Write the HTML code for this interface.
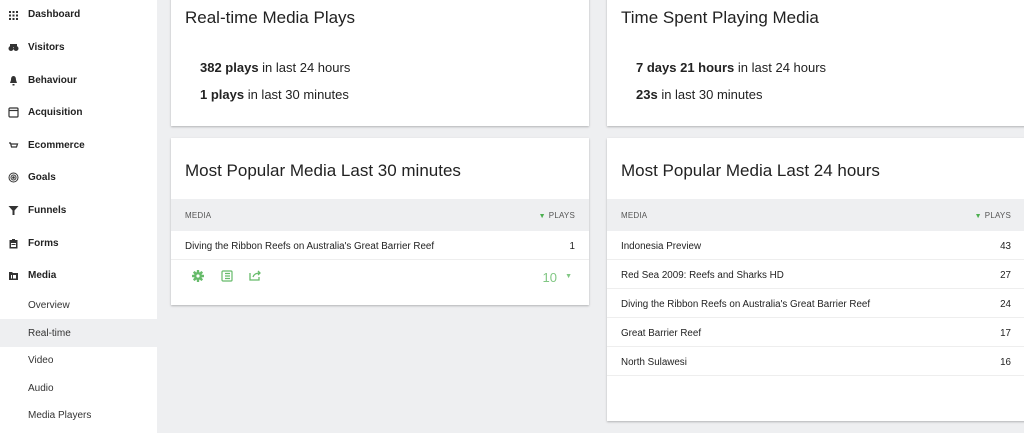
<!DOCTYPE html>
<html><head><meta charset="utf-8"><style>
*{margin:0;padding:0;box-sizing:border-box}
body{width:1024px;height:433px;overflow:hidden;background:#eeeff1;font-family:"Liberation Sans",Arial,sans-serif;color:#212121;position:relative}
.side{position:absolute;left:0;top:0;width:157px;height:433px;background:#fff}
.nav{position:absolute;left:28px;font-size:10px;font-weight:bold;color:#222}
.ic{position:absolute;left:8px;width:11px;height:11px}
.sub{position:absolute;left:28px;font-size:10px;color:#333}
.card{position:absolute;background:#fff;box-shadow:0 1px 2px rgba(0,0,0,.25)}
.h{position:absolute;left:14px;font-size:17px;color:#222}
.stat{position:absolute;left:29px;font-size:13px;color:#222}
.th{position:absolute;left:0;right:0;height:32px;background:#eeeff1;font-size:8px;color:#555;letter-spacing:.2px}
.th .l{position:absolute;left:14px;top:12px}
.th .r{position:absolute;right:14px;top:12px}
.tri{color:#4caf50;font-size:7px;margin-right:3px}
.row{position:absolute;left:0;right:0;height:29px;border-bottom:1px solid #eee;font-size:9.8px;color:#222}
.row .l{position:absolute;left:14px;top:10px}
.row .r{position:absolute;right:14px;top:10px}
</style></head><body>
<div class="side">
<svg class="ic" style="top:10px" viewBox="0 0 11 11" fill="#333"><rect x="1" y="1" width="2" height="2"/><rect x="4.5" y="1" width="2" height="2"/><rect x="8" y="1" width="2" height="2"/><rect x="1" y="4.5" width="2" height="2"/><rect x="4.5" y="4.5" width="2" height="2"/><rect x="8" y="4.5" width="2" height="2"/><rect x="1" y="8" width="2" height="2"/><rect x="4.5" y="8" width="2" height="2"/><rect x="8" y="8" width="2" height="2"/></svg>
<div class="nav" style="top:9px">Dashboard</div>
<svg class="ic" style="top:42px" viewBox="0 0 11 11" fill="#333"><circle cx="3" cy="6.5" r="2.5"/><circle cx="8" cy="6.5" r="2.5"/><rect x="2" y="2" width="7" height="3"/></svg>
<div class="nav" style="top:42px">Visitors</div>
<svg class="ic" style="top:75px" viewBox="0 0 11 11" fill="#333"><path d="M5.5 1C3.5 1 3 3 3 5L2 8h7L8 5C8 3 7.5 1 5.5 1zM4.5 9h2v1.5h-2z"/></svg>
<div class="nav" style="top:75px">Behaviour</div>
<svg class="ic" style="top:107px" viewBox="0 0 11 11" fill="none" stroke="#333" stroke-width="1.2"><rect x="1" y="1" width="9" height="9" rx="1"/><path d="M1 3.5h9"/></svg>
<div class="nav" style="top:107px">Acquisition</div>
<svg class="ic" style="top:140px" viewBox="0 0 11 11" fill="none" stroke="#333" stroke-width="1.2"><path d="M1 3h1.5l1 4h5l1-3H3"/></svg>
<div class="nav" style="top:140px">Ecommerce</div>
<svg class="ic" style="top:172px" viewBox="0 0 11 11" fill="none" stroke="#333" stroke-width="1"><circle cx="5.5" cy="5.5" r="4.5"/><circle cx="5.5" cy="5.5" r="2.5"/><circle cx="5.5" cy="5.5" r=".8" fill="#333"/></svg>
<div class="nav" style="top:172px">Goals</div>
<svg class="ic" style="top:205px" viewBox="0 0 11 11" fill="#333"><path d="M0.5 1h10L6.5 5.5v4.5h-2V5.5z"/></svg>
<div class="nav" style="top:205px">Funnels</div>
<svg class="ic" style="top:238px" viewBox="0 0 11 11" fill="#333"><path d="M1.5 2h2.5V1h3v1h2.5v8.5h-8zM3 5v4h5V5z"/><rect x="3.5" y="6" width="4" height="1"/></svg>
<div class="nav" style="top:238px">Forms</div>
<svg class="ic" style="top:270px" viewBox="0 0 11 11" fill="#333"><path d="M1 2h3l1 1h5v7H1z"/><rect x="3" y="5" width="1" height="3.5" fill="#fff"/><rect x="5" y="5" width="3" height="3.5" fill="#fff"/></svg>
<div class="nav" style="top:270px">Media</div>
<div class="sub" style="top:300px">Overview</div>
<div style="position:absolute;left:0;top:319px;width:157px;height:28px;background:#eeeff1"></div>
<div class="sub" style="top:328px">Real-time</div>
<div class="sub" style="top:355px">Video</div>
<div class="sub" style="top:383px">Audio</div>
<div class="sub" style="top:410px">Media Players</div>
</div>

<div class="card" style="left:171px;top:-10px;width:418px;height:136px">
<div class="h" style="top:18px">Real-time Media Plays</div>
<div class="stat" style="top:70px"><b>382 plays</b> in last 24 hours</div>
<div class="stat" style="top:97px"><b>1 plays</b> in last 30 minutes</div>
</div>
<div class="card" style="left:607px;top:-10px;width:430px;height:136px">
<div class="h" style="top:18px">Time Spent Playing Media</div>
<div class="stat" style="top:70px"><b>7 days 21 hours</b> in last 24 hours</div>
<div class="stat" style="top:97px"><b>23s</b> in last 30 minutes</div>
</div>

<div class="card" style="left:171px;top:138px;width:418px;height:167px">
<div class="h" style="top:23px">Most Popular Media Last 30 minutes</div>
<div class="th" style="top:61px"><span class="l">MEDIA</span><span class="r"><span class="tri">▼</span>PLAYS</span></div>
<div class="row" style="top:93px"><span class="l">Diving the Ribbon Reefs on Australia's Great Barrier Reef</span><span class="r">1</span></div>
<svg style="position:absolute;left:21px;top:132px" width="12" height="12" viewBox="0 0 12 12"><g fill="#66bb6a"><rect x="4.8" y="0" width="2.4" height="12" rx=".5"/><rect x="0" y="4.8" width="12" height="2.4" rx=".5"/><rect x="4.8" y="0" width="2.4" height="12" rx=".5" transform="rotate(45 6 6)"/><rect x="4.8" y="0" width="2.4" height="12" rx=".5" transform="rotate(-45 6 6)"/><circle cx="6" cy="6" r="4"/></g><circle cx="6" cy="6" r="1.6" fill="#fff"/></svg>
<svg style="position:absolute;left:50px;top:132px" width="12" height="12" viewBox="0 0 12 12" fill="none" stroke="#66bb6a" stroke-width="1.2"><rect x="1" y="1" width="10" height="10" rx="1"/><path d="M4 3.5h5M4 6h5M4 8.5h5"/></svg>
<svg style="position:absolute;left:78px;top:131px" width="13" height="12" viewBox="0 0 13 12" fill="none" stroke="#66bb6a" stroke-width="1.3"><path d="M1 4v7h9V8"/><path d="M4 8c1-3 3-4 7-4M9 2l2 2-2 2"/></svg>
<div style="position:absolute;right:32px;top:132px;font-size:13px;color:#81c784">10</div>
<div style="position:absolute;right:17px;top:135px;font-size:7px;color:#81c784">▼</div>
</div>

<div class="card" style="left:607px;top:138px;width:430px;height:283px">
<div class="h" style="top:23px">Most Popular Media Last 24 hours</div>
<div class="th" style="top:61px"><span class="l">MEDIA</span><span class="r" style="right:26px"><span class="tri">▼</span>PLAYS</span></div>
<div class="row" style="top:93px"><span class="l">Indonesia Preview</span><span class="r" style="right:26px">43</span></div>
<div class="row" style="top:122px"><span class="l">Red Sea 2009: Reefs and Sharks HD</span><span class="r" style="right:26px">27</span></div>
<div class="row" style="top:151px"><span class="l">Diving the Ribbon Reefs on Australia's Great Barrier Reef</span><span class="r" style="right:26px">24</span></div>
<div class="row" style="top:180px"><span class="l">Great Barrier Reef</span><span class="r" style="right:26px">17</span></div>
<div class="row" style="top:209px"><span class="l">North Sulawesi</span><span class="r" style="right:26px">16</span></div>
</div>
</body></html>
